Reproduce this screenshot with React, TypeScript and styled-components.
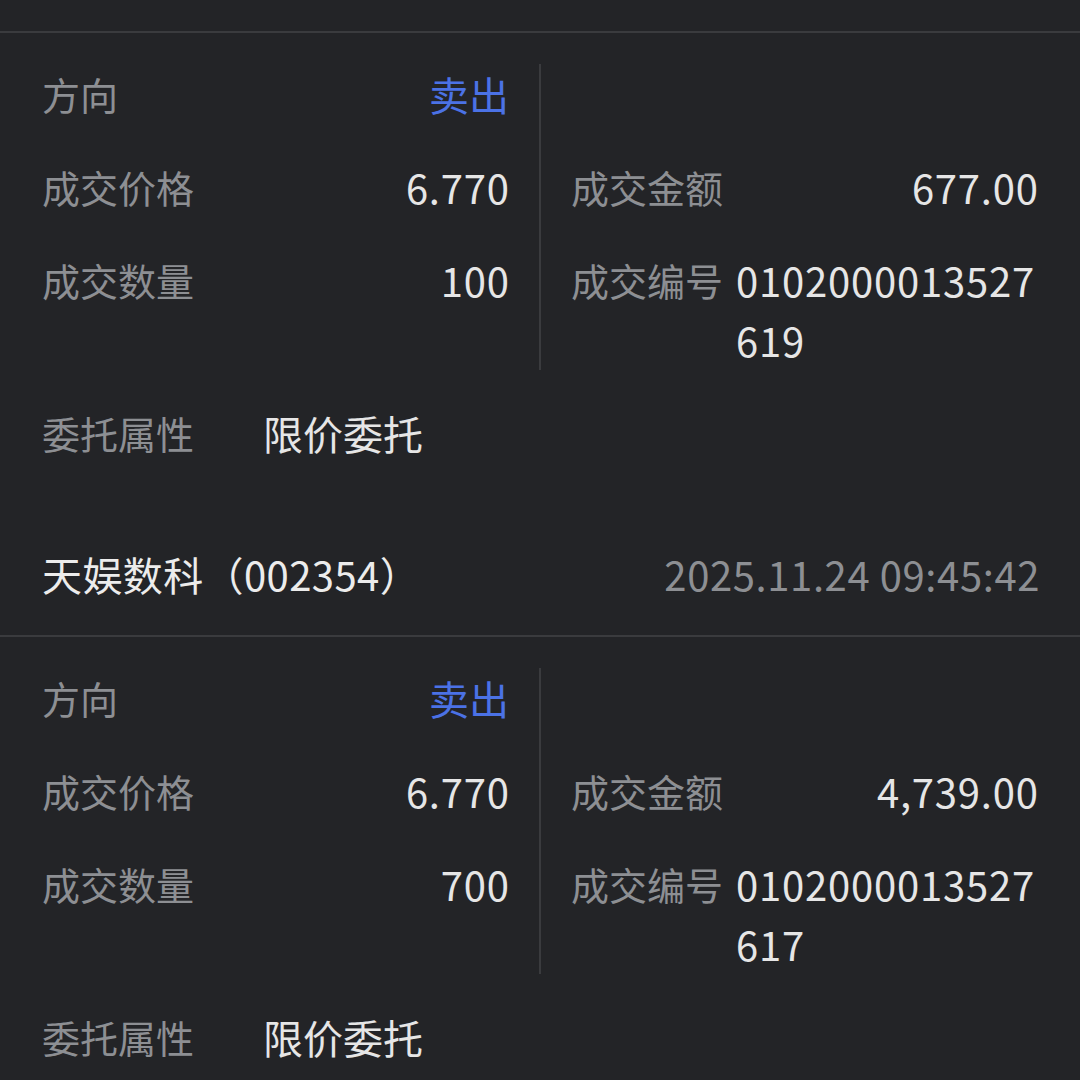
import React from "react";
import styled, { createGlobalStyle } from "styled-components";

const GlobalStyle = createGlobalStyle`
  html, body {
    margin: 0;
    padding: 0;
    background: #232427;
  }
  body {
    font-family: "Noto Sans CJK SC", "Noto Sans", sans-serif;
    -webkit-font-smoothing: antialiased;
  }
`;

type Deal = {
  name: string;
  code: string;
  time: string;
  side: string;
  price: string;
  amount: string;
  qty: string;
  dealNo: string;
  attr: string;
};

// 첫 번째 블록은 위쪽 헤더가 화면 밖이라 헤더 없이 시작
const deals: Deal[] = [
  {
    name: "",
    code: "",
    time: "",
    side: "卖出",
    price: "6.770",
    amount: "677.00",
    qty: "100",
    dealNo: "0102000013527619",
    attr: "限价委托",
  },
  {
    name: "天娱数科",
    code: "002354",
    time: "2025.11.24 09:45:42",
    side: "卖出",
    price: "6.770",
    amount: "4,739.00",
    qty: "700",
    dealNo: "0102000013527617",
    attr: "限价委托",
  },
];

const App = () => {
  return (
    <>
      <GlobalStyle />
      <SPage>
        <STopSpace />
        {deals.map((deal, idx) => (
          <React.Fragment key={idx}>
            {deal.name && (
              <SHeader>
                <STitle>
                  {deal.name}（{deal.code}）
                </STitle>
                <STime>{deal.time}</STime>
              </SHeader>
            )}
            <SBlock>
              <SGrid>
                <SColumn>
                  <SRow>
                    <SLabel>方向</SLabel>
                    <SSide>{deal.side}</SSide>
                  </SRow>
                  <SRow>
                    <SLabel>成交价格</SLabel>
                    <SNumber>{deal.price}</SNumber>
                  </SRow>
                  <SRow>
                    <SLabel>成交数量</SLabel>
                    <SNumber>{deal.qty}</SNumber>
                  </SRow>
                </SColumn>
                <SVLine />
                <SColumn>
                  <SRow />
                  <SRow>
                    <SLabel>成交金额</SLabel>
                    <SNumber>{deal.amount}</SNumber>
                  </SRow>
                  <SRow>
                    <SLabel>成交编号</SLabel>
                    <SWrapNumber>{deal.dealNo}</SWrapNumber>
                  </SRow>
                </SColumn>
              </SGrid>
              <SFullRow>
                <SWideLabel>委托属性</SWideLabel>
                <SPlainValue>{deal.attr}</SPlainValue>
              </SFullRow>
            </SBlock>
          </React.Fragment>
        ))}
      </SPage>
    </>
  );
};

export default App;

const SPage = styled.div`
  width: 1080px;
  height: 1080px;
  overflow: hidden;
  background: #232427;
  color: #e6e6e6;
`;

const STopSpace = styled.div`
  height: 31px;
`;

const SHeader = styled.div`
  display: flex;
  align-items: center;
  justify-content: space-between;
  height: 122px;
  padding: 0 42px;
`;

const STitle = styled.div`
  font-size: 40px;
  color: #ececec;
  letter-spacing: 0.4px;
`;

const STime = styled.div`
  font-size: 40px;
  color: #8d8f93;
  letter-spacing: 0.6px;
  margin-right: -2px;
`;

const SBlock = styled.div`
  border-top: 2px solid #3a3b3e;
  padding: 31px 42px 50px;
`;

const SGrid = styled.div`
  display: flex;
  align-items: stretch;
`;

const SColumn = styled.div`
  flex: 1;
  display: flex;
  flex-direction: column;
  gap: 33px;
`;

const SVLine = styled.div`
  width: 2px;
  background: #3a3b3e;
  margin: 0 30px;
`;

const SRow = styled.div`
  display: flex;
  justify-content: space-between;
  align-items: flex-start;
  min-height: 60px;
  font-size: 38px;
  line-height: 60px;
`;

const SLabel = styled.div`
  color: #8d8f93;
  flex-shrink: 0;
  margin-right: 13px;
`;

const SSide = styled.div`
  color: #4b72e6;
  font-size: 40px;
`;

const SNumber = styled.div`
  color: #e6e6e6;
  font-size: 40px;
  letter-spacing: 0.8px;
  margin-right: -0.8px;
  text-align: right;
`;

const SWrapNumber = styled(SNumber)`
  margin-left: auto;
  width: 304px;
  word-break: break-all;
  text-align: left;
`;

const SFullRow = styled.div`
  display: flex;
  margin-top: 33px;
  font-size: 38px;
  line-height: 60px;
`;

const SWideLabel = styled.div`
  width: 221px;
  color: #8d8f93;
`;

const SPlainValue = styled.div`
  color: #e6e6e6;
  font-size: 40px;
`;
